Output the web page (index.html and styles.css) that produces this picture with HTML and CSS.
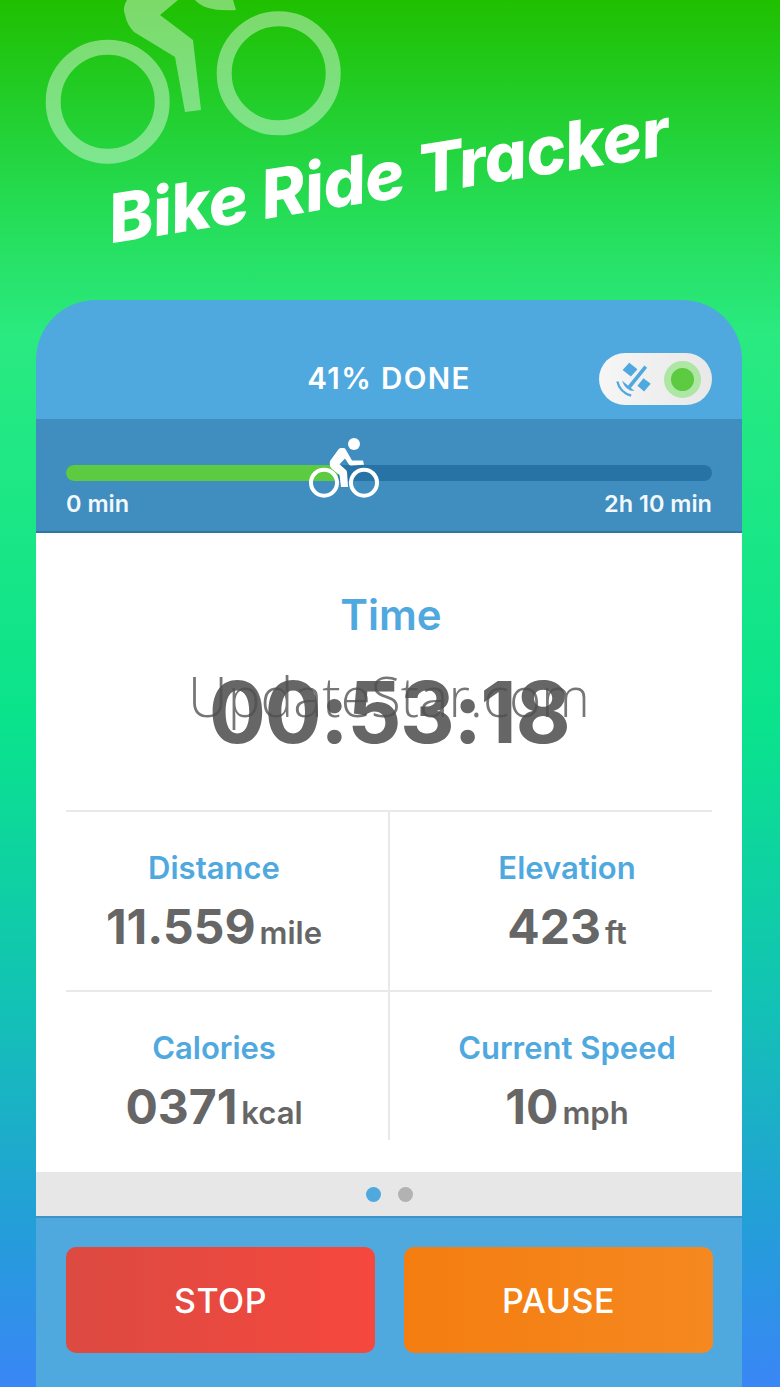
FILE: index.html
```html
<!DOCTYPE html>
<html lang="en">
<head>
    <meta charset="UTF-8">
    <meta name="viewport" content="width=device-width, initial-scale=1.0">
    <title>Bike Ride Tracker</title>
    <link rel="stylesheet" href="styles.css">
</head>
<body>

<header class="hero">
    <svg class="hero-bike" viewBox="0 0 345 170">
        <path fill="#fff" d="M127 0 Q122 8 125 15 Q127 25 134 32 L175 57 L185 112 L201 110 L193 40 L160 15 L178 0Z"/>
        <path fill="#fff" d="M195 0 Q205 12 236 10 L233 0Z"/>
        <circle cx="107.7" cy="101.7" r="54.5" fill="none" stroke="#fff" stroke-width="15"/>
        <circle cx="278.7" cy="73.3" r="54.5" fill="none" stroke="#fff" stroke-width="15"/>
    </svg>
    <h1>Bike Ride Tracker</h1>
</header>

<main class="card">
    <div class="card-top">
        <div class="done">41% DONE</div>
        <div class="gps">
            <svg class="satellite" viewBox="60 30 115 115">
                <path fill="#4fa9df" d="M100 38 L125 58 L105 80 L80 60Z M143 85 L165 102 L145 125 L125 108Z"/>
                <path fill="none" stroke="#4fa9df" stroke-width="11" d="M150 50 L100 112"/>
                <path fill="#4fa9df" d="M78 92 L116 124 Q88 124 78 92Z"/>
                <path fill="none" stroke="#4fa9df" stroke-width="7" d="M64 95 Q72 128 106 138"/>
            </svg>
            <span class="gps-dot"></span>
        </div>
    </div>

    <div class="progress">
        <div class="track">
            <div class="track-fill"></div>
            <svg class="track-bike" viewBox="0 0 72 62">
                <circle cx="46" cy="8" r="6" fill="#fff"/>
                <path fill="#fff" d="M22 25 L30 14 Q31 12 33 12 L36 12 Q37 12 38 14 L44 24.5 L55 24.5 L56 28.7 L43 29.5 Q41.5 29.5 41 28.5 L37 22.5 L31.5 28.3 L38 34 Q38.8 34.8 39 36 L40 51 L33 51 L31.5 39 L24 33 Q21 30 22 25Z"/>
                <circle cx="16" cy="46.7" r="13" fill="none" stroke="#fff" stroke-width="4"/>
                <circle cx="56" cy="46.7" r="13" fill="none" stroke="#fff" stroke-width="4"/>
            </svg>
        </div>
        <div class="track-labels">
            <span>0 min</span>
            <span>2h 10 min</span>
        </div>
    </div>

    <div class="panel">
        <div class="time">
            <div class="time-label">Time</div>
            <div class="time-value">00:53:18</div>
            <div class="watermark">UpdateStar.com</div>
        </div>
        <div class="stats">
            <div class="stat">
                <div class="stat-label">Distance</div>
                <div class="stat-value">11.559<small>mile</small></div>
            </div>
            <div class="stat">
                <div class="stat-label">Elevation</div>
                <div class="stat-value">423<small>ft</small></div>
            </div>
            <div class="stat">
                <div class="stat-label">Calories</div>
                <div class="stat-value">0371<small>kcal</small></div>
            </div>
            <div class="stat">
                <div class="stat-label">Current Speed</div>
                <div class="stat-value">10<small>mph</small></div>
            </div>
        </div>
    </div>

    <div class="pager">
        <span class="dot dot-on"></span>
        <span class="dot"></span>
    </div>

    <div class="actions">
        <button class="btn btn-stop">STOP</button>
        <button class="btn btn-pause">PAUSE</button>
    </div>
</main>

</body>
</html>
```

FILE: styles.css
```css
body {
    margin: 0;
    height: 1387px;
    overflow: hidden;
    font-family: 'Inter', 'Liberation Sans', sans-serif;
    color: #666;
    background: linear-gradient(180deg, #20c000 0%, #25dc55 15%, #2aea80 24%, #0ae38c 52%, #12c3b4 72%, #239fd8 88%, #3a86f6 100%);
}

.hero {
    height: 300px;
    position: relative;
    overflow: hidden;
    display: flex;
    justify-content: center;
    align-items: center;
}

.hero h1 {
    margin: 48px 0 0 -4px;
    color: #fff;
    font-size: 67px;
    font-weight: 800;
    font-style: italic;
    letter-spacing: -0.4px;
    white-space: nowrap;
    transform: rotate(-9deg);
}

.hero-bike {
    position: absolute;
    left: 0;
    top: 0;
    width: 345px;
    height: 170px;
    opacity: 0.41;
}

.card {
    margin: 0 38px 0 36px;
    height: 1087px;
    border-radius: 60px 60px 0 0;
    background-color: #4fa9df;
    display: flex;
    flex-direction: column;
}

.card-top {
    height: 119px;
    flex: none;
    position: relative;
    display: flex;
    justify-content: center;
    align-items: center;
    padding-top: 37px;
    box-sizing: border-box;
}

.done {
    color: #fff;
    font-size: 29.5px;
    font-weight: 600;
    letter-spacing: 1.4px;
}

.gps {
    position: absolute;
    right: 30px;
    top: 53px;
    width: 113px;
    height: 52px;
    border-radius: 26px;
    background: linear-gradient(90deg, #f6f6f6, #e8e8e8);
    display: flex;
    align-items: center;
    justify-content: flex-end;
    gap: 10px;
    padding-right: 11px;
    box-sizing: border-box;
}

.satellite {
    width: 38px;
    height: 38px;
}

.gps-dot {
    width: 23px;
    height: 23px;
    border-radius: 50%;
    background-color: #5ccb41;
    border: 7px solid #aee6a4;
}

.progress {
    height: 114px;
    flex: none;
    box-sizing: border-box;
    padding: 46px 30px 0;
    background-color: #408dbf;
    border-bottom: 2px solid #2f76a5;
}

.track {
    height: 16px;
    border-radius: 8px;
    background-color: #2873a5;
    position: relative;
}

.track-fill {
    width: 272px;
    height: 16px;
    border-radius: 8px 0 0 8px;
    background-color: #5ccb41;
}

.track-bike {
    position: absolute;
    left: 242px;
    top: -29px;
    width: 72px;
    height: 62px;
}

.track-labels {
    display: flex;
    justify-content: space-between;
    color: #f2f8fc;
    font-size: 23.5px;
    font-weight: 600;
    margin-top: 9px;
    line-height: 27px;
}

.panel {
    height: 639px;
    flex: none;
    box-sizing: border-box;
    padding: 0 30px;
    background-color: #fff;
}

.time {
    height: 277px;
    position: relative;
    text-align: center;
}

.time-label {
    padding-top: 57px;
    padding-left: 4px;
    color: #4fa9df;
    font-size: 42px;
    font-weight: 600;
    line-height: 50px;
}

.time-value {
    margin-top: 23px;
    font-size: 85px;
    font-weight: 700;
    line-height: 100px;
    letter-spacing: -1.5px;
}

.watermark {
    position: absolute;
    left: 0;
    right: 0;
    top: 128px;
    color: rgba(80, 80, 80, 0.78);
    font-family: 'Open Sans', sans-serif;
    font-size: 55px;
    font-weight: 300;
    line-height: 70px;
}

.stats {
    display: grid;
    grid-template-columns: 324px 1fr;
    grid-template-rows: 180px 148px;
    border-top: 2px solid #e9e9e9;
}

.stat {
    text-align: center;
    padding-top: 38px;
}

.stat:nth-child(odd) {
    border-right: 2px solid #e9e9e9;
    padding-right: 26px;
}

.stat:nth-child(even) {
    padding-left: 32px;
}

.stat:nth-child(-n+2) {
    border-bottom: 2px solid #e9e9e9;
}

.stat-label {
    color: #4fa9df;
    font-size: 31px;
    font-weight: 600;
    line-height: 36px;
}

.stat-value {
    font-size: 48px;
    font-weight: 700;
    line-height: 60px;
    margin-top: 11px;
}

.stat-value small {
    font-size: 31px;
    font-weight: 600;
    margin-left: 4px;
}

.pager {
    height: 46px;
    flex: none;
    display: flex;
    align-items: center;
    justify-content: center;
    gap: 17px;
    background-color: #e7e7e7;
    border-bottom: 2px solid #3f93c6;
    box-sizing: border-box;
}

.dot {
    width: 15px;
    height: 15px;
    border-radius: 50%;
    background-color: #b2b2b2;
}

.dot-on {
    background-color: #4fa9df;
}

.actions {
    display: flex;
    gap: 29px;
    padding: 29px 29px 0 30px;
}

.btn {
    flex: 1;
    height: 106px;
    border: none;
    border-radius: 10px;
    color: #fff;
    font-family: inherit;
    font-size: 34px;
    font-weight: 500;
    letter-spacing: 0.5px;
}

.btn-stop {
    background: linear-gradient(90deg, #dc4a41, #f5483e);
}

.btn-pause {
    background: linear-gradient(90deg, #f47d10, #f58820);
}
```
